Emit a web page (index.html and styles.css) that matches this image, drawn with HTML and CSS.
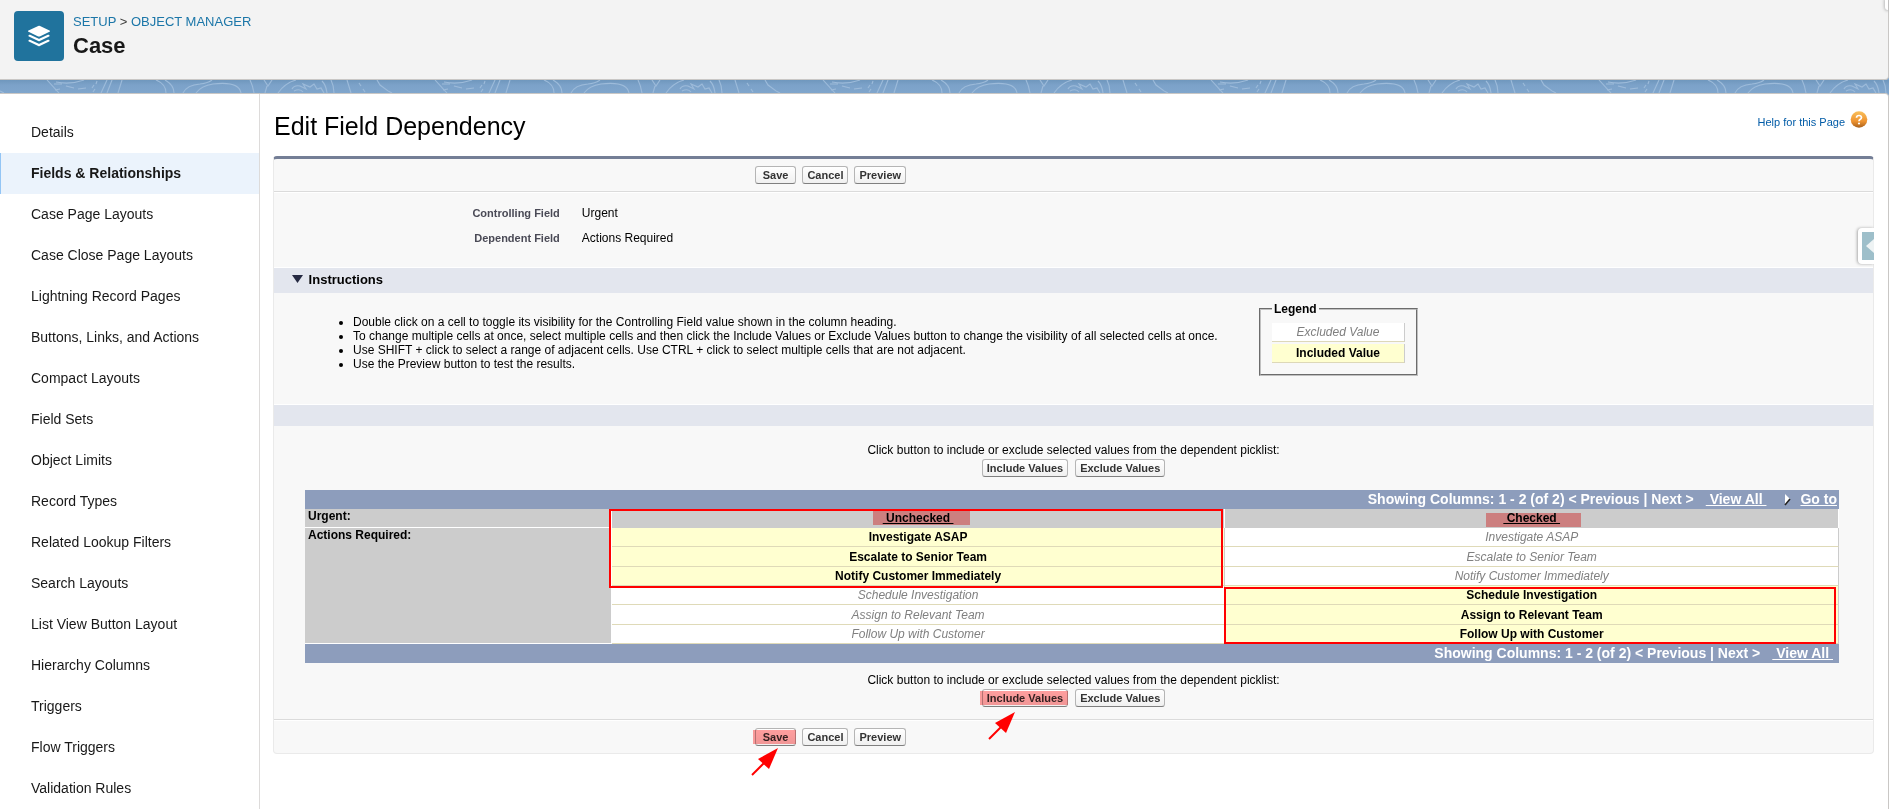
FILE: index.html
```html
<!DOCTYPE html>
<html lang="en">
<head>
<meta charset="utf-8">
<title>Edit Field Dependency</title>
<link rel="stylesheet" href="styles.css">
</head>
<body>
<header class="page-header">
  <span class="object-icon">
    <svg viewBox="0 0 24 24" width="24" height="24" aria-hidden="true" fill="#fff">
      <path d="M12 1.6 22.5 6.5c.7.3.7 1 0 1.300L12.800 12.400q-.8.400-1.600 0L1.500 7.800c-.7-.3-.7-1 0-1.300L11.200 2q.8-.4 1.600 0z"/>
      <path d="M1.700 11.200c.6-.5 1.300-.5 2-.2l7.500 3.600q.8.400 1.600 0l7.500-3.600c.7-.3 1.400-.3 2 .2.500.4.400 1-.2 1.300l-9.300 4.500q-.8.400-1.600 0l-9.300-4.500c-.6-.3-.7-.9-.2-1.300z"/>
      <path d="M1.700 16.200c.6-.5 1.300-.5 2-.2l7.500 3.600q.8.400 1.600 0l7.500-3.600c.7-.3 1.400-.3 2 .2.500.4.400 1-.2 1.300l-9.300 4.500q-.8.400-1.600 0l-9.300-4.500c-.6-.3-.7-.9-.2-1.300z"/>
    </svg>
  </span>
  <div class="heading">
    <nav class="crumbs" aria-label="Breadcrumb"><a href="#">SETUP</a> &gt; <a href="#">OBJECT MANAGER</a></nav>
    <h1 class="object-name">Case</h1>
  </div>
  <span class="edge-tab"></span>
</header>

<svg class="strip" height="13" aria-hidden="true">
  <defs>
    <linearGradient id="shade" x1="0" y1="0" x2="0" y2="1">
      <stop offset="0" stop-color="#6f97bd"/><stop offset=".4" stop-color="#7ca2c9"/><stop offset="1" stop-color="#80a6cc"/>
    </linearGradient>
    <pattern id="contours" width="388" height="13" patternUnits="userSpaceOnUse">
      <g fill="none" stroke="#9dbbda" stroke-width="1.100">
        <path d="M0 11l4 2M47 0l12 13M54 4h8M56 2q14 3 28-2M66 6l8 2M78 9l8-1M60 9l-5 1M92 8l2-3M96 4l1-3M93 12l2-3M107 0l-6 13M112 0l-5 13M122 0l-4 13M156 0q10 4 10 13M165 0q9 5 9 13M183 13q4-8 17-9 8-1 12-4M196 13q5-7 17-9 26-3 28 9M250 0q3 6 4 13M264 0l4 6 4-6M267 6l-2 7M278 13q7-10 18-13M292 9q2-4 8-3l6 3-3-5 7 3 4-3 3 5 4-1 3 5M294 11q6-3 9 1M322 1q4 4 5 12M331 0q3 6 3 13M347 0l4 13M359 3l2 3M363 9l2 3M377 0l3 5 11 8"/>
      </g>
    </pattern>
  </defs>
  <rect width="100%" height="13" fill="url(#shade)"/>
  <rect width="100%" height="13" fill="url(#contours)"/>
</svg>

<div class="card">
  <nav class="sidebar" aria-label="Object settings">
    <a href="#">Details</a>
    <a href="#" class="selected" aria-current="page">Fields &amp; Relationships</a>
    <a href="#">Case Page Layouts</a>
    <a href="#">Case Close Page Layouts</a>
    <a href="#">Lightning Record Pages</a>
    <a href="#">Buttons, Links, and Actions</a>
    <a href="#">Compact Layouts</a>
    <a href="#">Field Sets</a>
    <a href="#">Object Limits</a>
    <a href="#">Record Types</a>
    <a href="#">Related Lookup Filters</a>
    <a href="#">Search Layouts</a>
    <a href="#">List View Button Layout</a>
    <a href="#">Hierarchy Columns</a>
    <a href="#">Triggers</a>
    <a href="#">Flow Triggers</a>
    <a href="#">Validation Rules</a>
  </nav>

  <main class="content">
    <div class="title-row">
      <h2 class="title">Edit Field Dependency</h2>
      <a href="#" class="help">Help for this Page
        <svg class="help-icon" viewBox="0 0 18 18" width="18" height="18" aria-hidden="true">
          <defs><linearGradient id="orange" x1="0" y1="0" x2="0" y2="1"><stop offset="0" stop-color="#f9c05c"/><stop offset=".6" stop-color="#ef9431"/><stop offset="1" stop-color="#a8601c"/></linearGradient></defs>
          <circle cx="9" cy="8.500" r="8.300" fill="url(#orange)"/>
          <path d="M6.500 6.700Q6.600 4.500 9 4.500t2.500 2.100Q11.500 7.800 10 8.600 9 9.200 9 10.300" fill="none" stroke="#fff" stroke-width="1.700"/>
          <circle cx="9" cy="12.500" r="1.100" fill="#fff"/>
        </svg>
      </a>
    </div>

    <section class="panel">
      <div class="toolbar top">
        <button type="button" class="btn save">Save</button>
        <button type="button" class="btn">Cancel</button>
        <button type="button" class="btn">Preview</button>
      </div>

      <dl class="fields">
        <dt>Controlling Field</dt><dd>Urgent</dd>
        <dt>Dependent Field</dt><dd>Actions Required</dd>
      </dl>

      <span class="drawer">
        <svg viewBox="0 0 12 28" width="12" height="28" aria-hidden="true"><rect width="12" height="28" fill="#9ebfca"/><path d="M12 7v14l-8-7z" fill="#eef3f4"/></svg>
      </span>

      <h3 class="band instructions-head">
        <svg viewBox="0 0 11 8" width="11" height="8" aria-hidden="true"><path d="M0 0h11L5.500 8z" fill="#262a42"/></svg>
        Instructions
      </h3>
      <div class="instructions">
        <ul>
          <li>Double click on a cell to toggle its visibility for the Controlling Field value shown in the column heading.</li>
          <li>To change multiple cells at once, select multiple cells and then click the Include Values or Exclude Values button to change the visibility of all selected cells at once.</li>
          <li>Use SHIFT + click to select a range of adjacent cells. Use CTRL + click to select multiple cells that are not adjacent.</li>
          <li>Use the Preview button to test the results.</li>
        </ul>
        <fieldset class="legend">
          <legend>Legend</legend>
          <div class="sample excluded">Excluded Value</div>
          <div class="sample included">Included Value</div>
        </fieldset>
      </div>

      <div class="band spacer"></div>

      <div class="choose choose-top">
        <p>Click button to include or exclude selected values from the dependent picklist:</p>
        <div class="pair">
          <button type="button" class="btn">Include Values</button>
          <button type="button" class="btn">Exclude Values</button>
        </div>
      </div>

      <div class="matrix">
        <div class="pager"><span>Showing Columns: 1 - 2 (of 2) &lt; Previous | Next &gt;</span>
          <a href="#">&nbsp;View All&nbsp;</a>
          <a href="#" class="goto"><svg viewBox="0 0 8 12" width="8" height="12" aria-hidden="true"><path d="M1 0l5 5-5 6z" fill="#fff"/><path d="M6 5l-5 6" stroke="#222" stroke-width="1.600"/></svg><span>Go to</span></a>
        </div>
        <div class="grid-wrap">
          <table class="grid">
            <colgroup><col class="c-label"><col class="c-value"><col class="c-value"></colgroup>
            <tbody>
              <tr>
                <th scope="row" class="label">Urgent:</th>
                <th scope="col" class="head"><a href="#">&nbsp;Unchecked&nbsp;</a></th>
                <th scope="col" class="head"><a href="#">&nbsp;Checked&nbsp;</a></th>
              </tr>
              <tr><th scope="rowgroup" rowspan="6" class="label tall">Actions Required:</th><td class="included">Investigate ASAP</td><td class="excluded">Investigate ASAP</td></tr>
              <tr class="roomy"><td class="included">Escalate to Senior Team</td><td class="excluded">Escalate to Senior Team</td></tr>
              <tr><td class="included">Notify Customer Immediately</td><td class="excluded">Notify Customer Immediately</td></tr>
              <tr><td class="excluded">Schedule Investigation</td><td class="included">Schedule Investigation</td></tr>
              <tr class="roomy"><td class="excluded">Assign to Relevant Team</td><td class="included">Assign to Relevant Team</td></tr>
              <tr><td class="excluded">Follow Up with Customer</td><td class="included">Follow Up with Customer</td></tr>
            </tbody>
          </table>
          <span class="marker mark-unchecked"></span>
          <span class="marker mark-checked"></span>
          <span class="frame frame-unchecked"></span>
          <span class="frame frame-checked"></span>
        </div>
        <div class="pager bottom"><span>Showing Columns: 1 - 2 (of 2) &lt; Previous | Next &gt;</span>
          <a href="#">&nbsp;View All&nbsp;</a>
        </div>
      </div>

      <div class="choose choose-bottom">
        <p>Click button to include or exclude selected values from the dependent picklist:</p>
        <div class="pair">
          <span class="called-out">
            <button type="button" class="btn">Include Values</button>
            <span class="marker mark-button"></span>
            <svg class="arrow arrow-include" viewBox="0 0 28 28" width="28" height="28" aria-hidden="true"><path d="M1 27l13-13" stroke="#f00" stroke-width="2"/><path d="M27 0 18 21 7 11z" fill="#f00"/></svg>
          </span>
          <button type="button" class="btn">Exclude Values</button>
        </div>
      </div>

      <div class="toolbar foot">
        <span class="called-out">
          <button type="button" class="btn save">Save</button>
          <span class="marker mark-button"></span>
          <svg class="arrow arrow-save" viewBox="0 0 28 28" width="28" height="28" aria-hidden="true"><path d="M1 27l13-13" stroke="#f00" stroke-width="2"/><path d="M27 0 18 21 7 11z" fill="#f00"/></svg>
        </span>
        <button type="button" class="btn">Cancel</button>
        <button type="button" class="btn">Preview</button>
      </div>
    </section>
  </main>
</div>
</body>
</html>
```
FILE: styles.css
```css
* { box-sizing: border-box; }

body {
  margin: 0;
  height: 100vh;
  display: flex;
  flex-direction: column;
  overflow: hidden;
  background: #80a6cc;
  font: 12px/14px "Liberation Sans", Arial, sans-serif;
  color: #000;
}

h1, h2, h3, p, ul, dl, dd { margin: 0; }

/* Header */
.page-header {
  position: relative;
  display: flex;
  gap: 9px;
  flex: none;
  height: 80px;
  padding: 11px 14px;
  background: #f3f3f3;
  border: solid #c9c7c5;
  border-width: 0 1px 1px 0;
  border-radius: 0 0 4px 0;
}
.object-icon {
  display: flex;
  align-items: center;
  justify-content: center;
  width: 50px;
  height: 50px;
  border-radius: 4px;
  background: #20739d;
}
.crumbs { margin-top: 2px; font-size: 13px; line-height: 18px; color: #3e3e3c; }
.crumbs a { color: #1b76a8; text-decoration: none; }
.object-name { margin-top: 1px; font-size: 22px; line-height: 27px; color: #181818; }
.edge-tab {
  position: absolute;
  top: 0;
  right: 0;
  width: 3px;
  height: 10px;
  border-radius: 0 0 0 4px;
  background: #fff;
  box-shadow: 0 0 3px 1px #bbb;
}
.strip { display: block; flex: none; width: 100%; }

/* Card and sidebar */
.card {
  flex: 1;
  display: flex;
  min-height: 0;
  background: #fff;
  border: solid #c9c7c5;
  border-width: 1px 1px 0 0;
  border-radius: 0 4px 0 0;
}
.sidebar {
  flex: none;
  width: 260px;
  padding-top: 18px;
  border-right: 1px solid #dddbda;
}
.sidebar a {
  display: block;
  padding: 0 31px;
  font-size: 14px;
  line-height: 41px;
  color: #181818;
  text-decoration: none;
}
.sidebar .selected {
  padding-left: 30px;
  border-left: 1px solid #93c5f5;
  background: #ebf3fc;
  font-weight: bold;
}

/* Content */
.content { flex: 1; min-width: 0; padding: 16px 14px 0 13px; }
.title-row { display: flex; justify-content: space-between; height: 46px; padding: 0 6px 0 1px; }
.title { font-size: 25px; line-height: 32px; font-weight: normal; }
.help {
  display: flex;
  align-items: flex-start;
  gap: 5px;
  font-size: 11px;
  line-height: 24px;
  color: #015ba7;
  text-decoration: none;
}
.help-icon { margin-top: 1px; }

.panel {
  position: relative;
  background: #f8f8f8;
  border: 1px solid #eaeaea;
  border-top: 3px solid #747e96;
  border-radius: 4px;
}
.toolbar { display: flex; gap: 6px; padding: 7px 0 7px calc(30% + 1px); }
.top { border-bottom: 1px solid #dbdbdb; box-shadow: 0 1px #fff; }
.foot { border-top: 1px solid #dbdbdb; box-shadow: inset 0 1px #fff; padding-top: 8px; }

.btn {
  display: block;
  height: 18px;
  padding: 0 4px;
  border: 1px solid #b5b5b5;
  border-bottom-color: #7f7f7f;
  border-radius: 3px;
  background: linear-gradient(#fff, #f0f0f0);
  font: bold 11px/14px "Liberation Sans", Arial, sans-serif;
  color: #333;
}
.save { padding: 0 7px; }

.fields {
  display: grid;
  grid-template-columns: 18% 1fr;
  column-gap: 20px;
  row-gap: 11px;
  padding: 14px 0 22px;
}
.fields dt { padding-right: 2px; text-align: right; font-size: 11px; font-weight: bold; color: #4a4a56; }
.drawer {
  position: absolute;
  top: 69px;
  right: -1px;
  width: 16px;
  height: 36px;
  padding: 4px 0 4px 4px;
  border-radius: 4px 0 0 4px;
  background: #fff;
  box-shadow: -1px 0 3px #aaa;
  clip-path: inset(-3px 0 -3px -4px);
}
.drawer svg { display: block; }

.band { border-top: 1px solid #fff; background: #e3e6ee; }
.instructions-head { padding: 5px 0 6px 18px; font-size: 13px; line-height: 14px; }
.instructions-head svg { margin-right: 2px; vertical-align: 1px; }
.spacer { height: 22px; }

.instructions { display: flex; align-items: flex-start; gap: 6px; height: 111px; padding-top: 9px; }
.instructions ul { flex: 0 1 979px; padding: 13px 0 0 79px; font-size: 12px; }
.legend {
  width: 159px;
  height: 74px;
  margin: 0;
  padding: 7px 11px 0;
  border: 2px groove #c0c0c0;
  font-size: 12px;
}
.legend legend { padding: 0 2px; font-weight: bold; }
.sample {
  height: 19px;
  margin-bottom: 2px;
  border: solid #ccc;
  border-width: 0 1px 1px 0;
  border-bottom-color: #ddd8b8;
  line-height: 18px;
  text-align: center;
}
.excluded { background: #fff; color: #808080; font-style: italic; }
.included { background: #ffffd0; color: #000; font-weight: bold; }

.choose { text-align: center; font-size: 12px; }
.pair { display: flex; justify-content: center; gap: 7px; margin-top: 2px; }
.choose-top { padding: 17px 0 13px; }
.choose-bottom { padding: 10px 0 12px; }

/* Dependency matrix */
.matrix { margin: 0 34px 0 31px; }
.pager {
  display: flex;
  justify-content: flex-end;
  gap: 12px;
  height: 19px;
  padding-right: 2px;
  background: #8d9dbc;
  font-size: 14px;
  line-height: 19px;
  font-weight: bold;
  color: #fff;
}
.pager a { color: #fff; }
.goto { display: flex; align-items: center; gap: 8px; padding-left: 6px; text-decoration: none; }
.goto span { text-decoration: underline; }
.bottom { padding-right: 6px; }
.grid-wrap { position: relative; }
.grid { width: 100%; border-collapse: separate; border-spacing: 0; table-layout: fixed; font-size: 12px; }
.c-label { width: 20%; }
.c-value { width: 40%; }
.grid tr { height: 19px; }
.grid .roomy { height: 20px; }
.grid th, .grid td { padding: 0; line-height: 18px; text-align: center; }
.grid td { border: solid #ccc; border-width: 0 1px 1px 0; border-bottom-color: #dfdab8; }
.grid .label {
  padding-left: 3px;
  border: solid #fff;
  border-width: 0 1px 1px 0;
  background: #ccc;
  line-height: 14px;
  text-align: left;
  vertical-align: top;
}
.grid .head { border-right: 1px solid #fff; background: #ccc; line-height: 19px; }
.head a { color: #000; }

/* Annotations */
.marker { position: absolute; background: #ff9f9f; mix-blend-mode: multiply; pointer-events: none; }
.mark-unchecked { left: 37%; top: 2px; width: 97px; height: 14px; }
.mark-checked { left: 77%; top: 4px; width: 95px; height: 14px; }
.frame { position: absolute; border: 2px solid #f00; pointer-events: none; }
.frame-unchecked { left: calc(20% - 3px); top: 0; width: calc(40% + 1px); height: 79px; }
.frame-checked { left: calc(60% - 1px); top: 78px; width: calc(40% - 2px); height: 57px; }
.called-out { position: relative; }
.mark-button { left: -2px; top: 2px; right: 0; height: 14px; }
.arrow { position: absolute; pointer-events: none; }
.arrow-include { left: 6px; top: 23px; }
.arrow-save { left: -4px; top: 20px; }
```
